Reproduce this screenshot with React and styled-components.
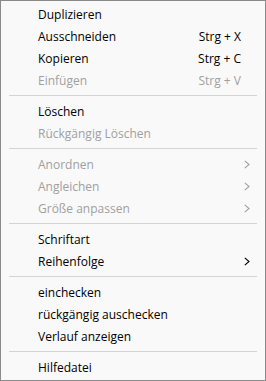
import React from 'react';
import styled, { createGlobalStyle } from 'styled-components';

const GlobalStyle = createGlobalStyle`
  html, body {
    margin: 0;
    padding: 0;
    background: #ffffff;
  }
`;

const Menu = styled.div`
  box-sizing: border-box;
  width: 266px;
  height: 381px;
  padding: 2px 0 1px;
  background: #f9f9f9;
  border: 1px solid #8a8a8a;
  font-family: 'Open Sans', 'Noto Sans', sans-serif;
  font-size: 12px;
  display: flex;
  flex-direction: column;
`;

const Item = styled.div`
  height: 22px;
  display: flex;
  align-items: center;
  padding: 0 14px 0 37px;
  color: ${(p) => (p.disabled ? '#a0a0a0' : '#000000')};
`;

const Label = styled.span`
  flex: 1;
  white-space: nowrap;
`;

const Shortcut = styled.span`
  width: 60px;
  text-align: right;
  margin-right: 10px;
`;

const Arrow = styled.svg`
  width: 6px;
  height: 9px;
  margin-right: 1px;
`;

const Separator = styled.div`
  height: 1px;
  margin: 4px 8px;
  background: #d4d4d4;
`;

const Chevron = () => (
  <Arrow viewBox="0 0 6 9">
    <path d="M0.8 0.8 L5 4.5 L0.8 8.2" fill="none" stroke="currentColor" strokeWidth="1.1" />
  </Arrow>
);

const groups = [
  [
    { label: 'Duplizieren' },
    { label: 'Ausschneiden', shortcut: 'Strg + X' },
    { label: 'Kopieren', shortcut: 'Strg + C' },
    { label: 'Einfügen', shortcut: 'Strg + V', disabled: true },
  ],
  [
    { label: 'Löschen' },
    { label: 'Rückgängig Löschen', disabled: true },
  ],
  [
    { label: 'Anordnen', sub: true, disabled: true },
    { label: 'Angleichen', sub: true, disabled: true },
    { label: 'Größe anpassen', sub: true, disabled: true },
  ],
  [
    { label: 'Schriftart' },
    { label: 'Reihenfolge', sub: true },
  ],
  [
    { label: 'einchecken' },
    { label: 'rückgängig auschecken' },
    { label: 'Verlauf anzeigen' },
  ],
  [{ label: 'Hilfedatei' }],
];

const App = () => {
  return (
    <>
      <GlobalStyle />
      <Menu>
        {groups.map((group, gi) => (
          <React.Fragment key={gi}>
            {gi > 0 && <Separator />}
            {group.map((item) => (
              <Item key={item.label} disabled={item.disabled}>
                <Label>{item.label}</Label>
                {item.shortcut && <Shortcut>{item.shortcut}</Shortcut>}
                {item.sub && <Chevron />}
              </Item>
            ))}
          </React.Fragment>
        ))}
      </Menu>
    </>
  );
};

export default App;
